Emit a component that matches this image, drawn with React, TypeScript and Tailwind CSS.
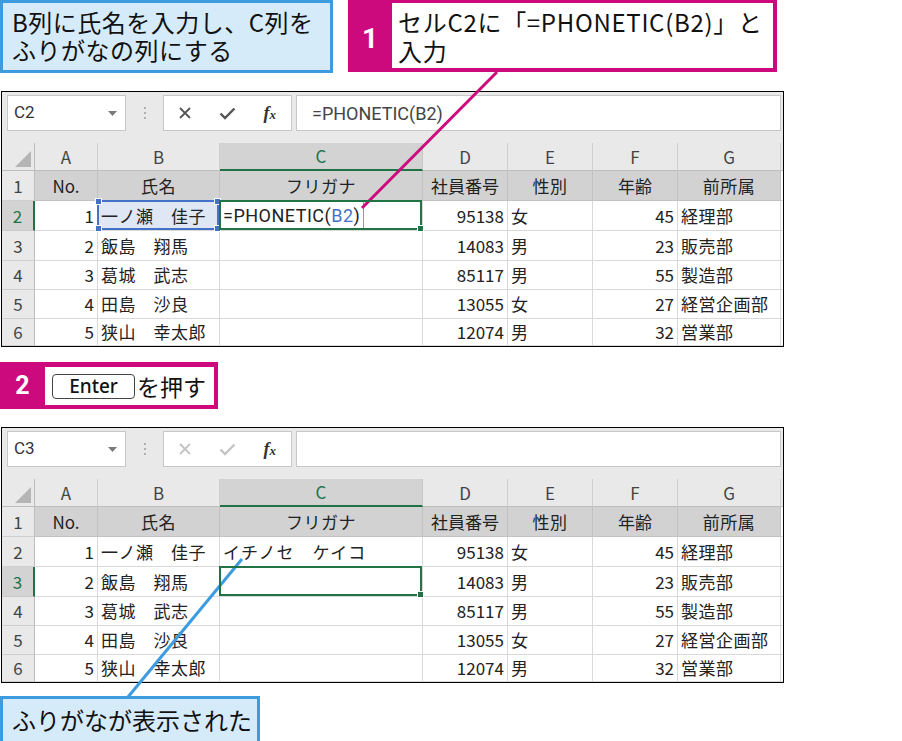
import React from 'react';

const JP = "font-['Noto_Sans_CJK_JP','Noto_Sans',sans-serif]";
const RB = "font-['Roboto','Noto_Sans_CJK_JP',sans-serif]";

const COLS = 'grid grid-cols-[33px_63px_122px_203px_85px_85px_85px_103px_1fr]';
const LETTERS = ['A', 'B', 'C', 'D', 'E', 'F', 'G'];
const ROW_H = ['h-[30px]', 'h-[30px]', 'h-[30px]', 'h-[29px]', 'h-[29px]', 'h-[27px]'];

const DATA = [
  ['No.', '氏名', 'フリガナ', '社員番号', '性別', '年齢', '前所属'],
  ['1', '一ノ瀬　佳子', '', '95138', '女', '45', '経理部'],
  ['2', '飯島　翔馬', '', '14083', '男', '23', '販売部'],
  ['3', '葛城　武志', '', '85117', '男', '55', '製造部'],
  ['4', '田島　沙良', '', '13055', '女', '27', '経営企画部'],
  ['5', '狭山　幸太郎', '', '12074', '男', '32', '営業部'],
];
// data rows: A right, B left, C left, D right, E left, F right, G left
const ALIGN = ['justify-end', 'justify-start', 'justify-start', 'justify-end', 'justify-start', 'justify-end', 'justify-start'];

function XIcon({ color }: { color: string }) {
  return (
    <svg width="14" height="14" viewBox="0 0 14 14">
      <path d="M2 2L12 12M12 2L2 12" stroke={color} strokeWidth="1.8" fill="none" />
    </svg>
  );
}

function CheckIcon({ color }: { color: string }) {
  return (
    <svg width="17" height="13" viewBox="0 0 17 13">
      <path d="M1.5 6.5L6 11L15.5 1.5" stroke={color} strokeWidth="2.4" fill="none" />
    </svg>
  );
}

function Handle({ pos, color }: { pos: string; color: string }) {
  return <span className={`absolute w-[7px] h-[7px] border border-white ${pos} ${color}`} />;
}

function Sheet({ editing }: { editing: boolean }) {
  const selRow = editing ? 2 : 3;
  const iconColor = editing ? '#555555' : '#c4c4c4';

  return (
    <div className={`ml-[1px] w-[783px] h-[256px] border border-black bg-[#e9e9e9] overflow-hidden flex flex-col ${JP}`}>
      {/* Formula bar */}
      <div className="h-[51px] shrink-0 flex items-start pt-[3px] pl-[5px] pr-[2px]">
        <div className="w-[119px] h-[36px] bg-white border border-[#c8c8c8] flex items-center justify-between pl-[6px] pr-[8px]">
          <span className={`${RB} text-[17px] text-[#333]`}>{editing ? 'C2' : 'C3'}</span>
          <svg width="9" height="5" viewBox="0 0 9 5">
            <path d="M0 0H9L4.5 5Z" fill="#7a7a7a" />
          </svg>
        </div>
        <div className="w-[37px] h-[36px] flex flex-col items-center justify-center gap-[3px]">
          <span className="w-[2px] h-[2px] bg-[#b0b0b0]" />
          <span className="w-[2px] h-[2px] bg-[#b0b0b0]" />
          <span className="w-[2px] h-[2px] bg-[#b0b0b0]" />
        </div>
        <div className="w-[129px] h-[36px] bg-white border border-[#c8c8c8] grid grid-cols-3 items-center justify-items-center">
          <XIcon color={iconColor} />
          <CheckIcon color={iconColor} />
          <span className="font-['Liberation_Serif',serif] italic font-bold text-[18px] text-[#333] leading-none">
            f<span className="text-[13px]">x</span>
          </span>
        </div>
        <div className={`ml-[4px] flex-1 h-[36px] bg-white border border-[#c8c8c8] flex items-center pl-[15px] ${RB} text-[18px] text-[#444]`}>
          {editing ? '=PHONETIC(B2)' : ''}
        </div>
      </div>

      {/* Column headers */}
      <div className={`${COLS} h-[28px] shrink-0 text-[17px] text-[#444]`}>
        <div className="relative border-r border-b border-[#bdbdbd] bg-[#e9e9e9]">
          <svg className="absolute right-[3px] bottom-[3px]" width="16" height="16" viewBox="0 0 16 16">
            <path d="M16 0V16H0Z" fill="#b5b5b5" />
          </svg>
        </div>
        {LETTERS.map((l) => (
          <div
            key={l}
            className={
              l === 'C'
                ? 'flex items-center justify-center bg-[#d3d3d3] border-r border-[#c8c8c8] border-b-2 border-b-[#217346] text-[#217346]'
                : 'flex items-center justify-center bg-[#e9e9e9] border-r border-[#cfcfcf] border-b border-b-[#bdbdbd]'
            }
          >
            {l}
          </div>
        ))}
        <div className="bg-[#e9e9e9] border-b border-[#bdbdbd]" />
      </div>

      {/* Rows */}
      {DATA.map((row, ri) => {
        const rowNo = ri + 1;
        const isHeader = ri === 0;
        const rowSel = rowNo === selRow;
        return (
          <div key={ri} className={`${COLS} ${ROW_H[ri]} shrink-0 text-[17px] text-[#222]`}>
            <div
              className={
                rowSel
                  ? 'flex items-center justify-center bg-[#d3d3d3] border-b border-[#c8c8c8] border-r-2 border-r-[#217346] text-[#217346]'
                  : 'flex items-center justify-center bg-[#e9e9e9] border-b border-[#cfcfcf] border-r border-r-[#bdbdbd] text-[#444]'
              }
            >
              {rowNo}
            </div>
            {row.map((val, ci) => {
              const isB2 = editing && rowNo === 2 && ci === 1;
              const isSel = rowNo === selRow && ci === 2;
              const bg = isHeader ? 'bg-[#d2d2d2] border-[#c2c2c2]' : isB2 ? 'bg-[#dfe7f5] border-[#d9d9d9]' : 'bg-white border-[#d9d9d9]';
              const align = isHeader ? 'justify-center' : ALIGN[ci];
              let content: React.ReactNode = val;
              if (editing && rowNo === 2 && ci === 2) {
                content = (
                  <span className={`${RB} text-[18px] text-[#222] flex items-center`}>
                    =PHONETIC(<span className="text-[#4472c4]">B2</span>)
                    <span className="ml-[3px] w-[1px] h-[28px] bg-[#9a9a9a]" />
                  </span>
                );
              } else if (!editing && rowNo === 2 && ci === 2) {
                content = <span className="tracking-[1px]">イチノセ　ケイコ</span>;
              }
              return (
                <div
                  key={ci}
                  className={`relative flex items-center ${align} px-[3px] border-r border-b ${bg} whitespace-nowrap ${
                    ci === 0 || ci === 3 || ci === 5 ? '' : 'tracking-[0.5px]'
                  }`}
                >
                  {content}
                  {isB2 && (
                    <span className="absolute -left-[1px] -top-[1px] right-0 bottom-0 border-2 border-[#4472c4] z-10">
                      <Handle pos="-left-[4px] -top-[4px]" color="bg-[#4472c4]" />
                      <Handle pos="-right-[4px] -top-[4px]" color="bg-[#4472c4]" />
                      <Handle pos="-left-[4px] -bottom-[4px]" color="bg-[#4472c4]" />
                      <Handle pos="-right-[4px] -bottom-[4px]" color="bg-[#4472c4]" />
                    </span>
                  )}
                  {isSel && (
                    <span className="absolute -left-[1px] -top-[1px] right-0 bottom-0 border-2 border-[#217346] z-10">
                      <Handle pos="-right-[4px] -bottom-[4px]" color="bg-[#217346]" />
                    </span>
                  )}
                </div>
              );
            })}
            <div className="bg-white border-b border-[#d9d9d9]" />
          </div>
        );
      })}
    </div>
  );
}

export default function App() {
  return (
    <div className={`relative w-[902px] h-[741px] bg-white overflow-hidden flex flex-col ${JP} text-[#111]`}>
      {/* Top callouts */}
      <div className="flex h-[73px] shrink-0">
        <div className="w-[333px] h-[73px] border-[3px] border-[#3d9be0] bg-[#d6ebf9] pl-[9px] pt-[5px] text-[24px] leading-[28px] tracking-[0.5px]">
          B列に氏名を入力し、C列を
          <br />
          ふりがなの列にする
        </div>
        <div className="ml-[15px] w-[429px] h-[72px] bg-[#cc0a7e] flex pt-[3px] pr-[4px] pb-[4px]">
          <div className={`w-[44px] flex items-center justify-center pt-[6px] text-white font-bold text-[28px] ${RB}`}>1</div>
          <div className="flex-1 bg-white pl-[6px] pt-[4px] text-[24px] leading-[29px] tracking-[0.7px] whitespace-nowrap">
            セルC2に「=PHONETIC(B2)」と
            <br />
            入力
          </div>
        </div>
      </div>

      <div className="mt-[18px]">
        <Sheet editing />
      </div>

      {/* Step 2 */}
      <div className="mt-[15px] w-[218px] h-[47px] bg-[#cc0a7e] flex pt-[5px] pr-[4px] pb-[4px] shrink-0">
        <div className={`w-[45px] flex items-center justify-center text-white font-bold text-[25px] ${RB}`}>2</div>
        <div className="flex-1 bg-white flex items-center pl-[7px]">
          <span className="w-[83px] h-[25px] rounded-[4px] border border-[#444] flex items-center justify-center text-[19px] font-medium text-[#111] font-['Noto_Sans',sans-serif]">
            Enter
          </span>
          <span className="ml-[2px] text-[23px]">を押す</span>
        </div>
      </div>

      <div className="mt-[18px]">
        <Sheet editing={false} />
      </div>

      {/* Bottom callout */}
      <div className="mt-[13px] w-[260px] h-[48px] shrink-0 border-[3px] border-[#3d9be0] bg-[#d6ebf9] pl-[9px] flex items-center text-[24px]">
        ふりがなが表示された
      </div>

      {/* Leader lines */}
      <svg className="absolute left-0 top-0 pointer-events-none" width="902" height="741" viewBox="0 0 902 741">
        <line x1="497" y1="72" x2="362" y2="208" stroke="#cc0a7e" strokeWidth="3" />
        <line x1="128" y1="697" x2="242" y2="559" stroke="#3d9be0" strokeWidth="3" />
      </svg>
    </div>
  );
}
